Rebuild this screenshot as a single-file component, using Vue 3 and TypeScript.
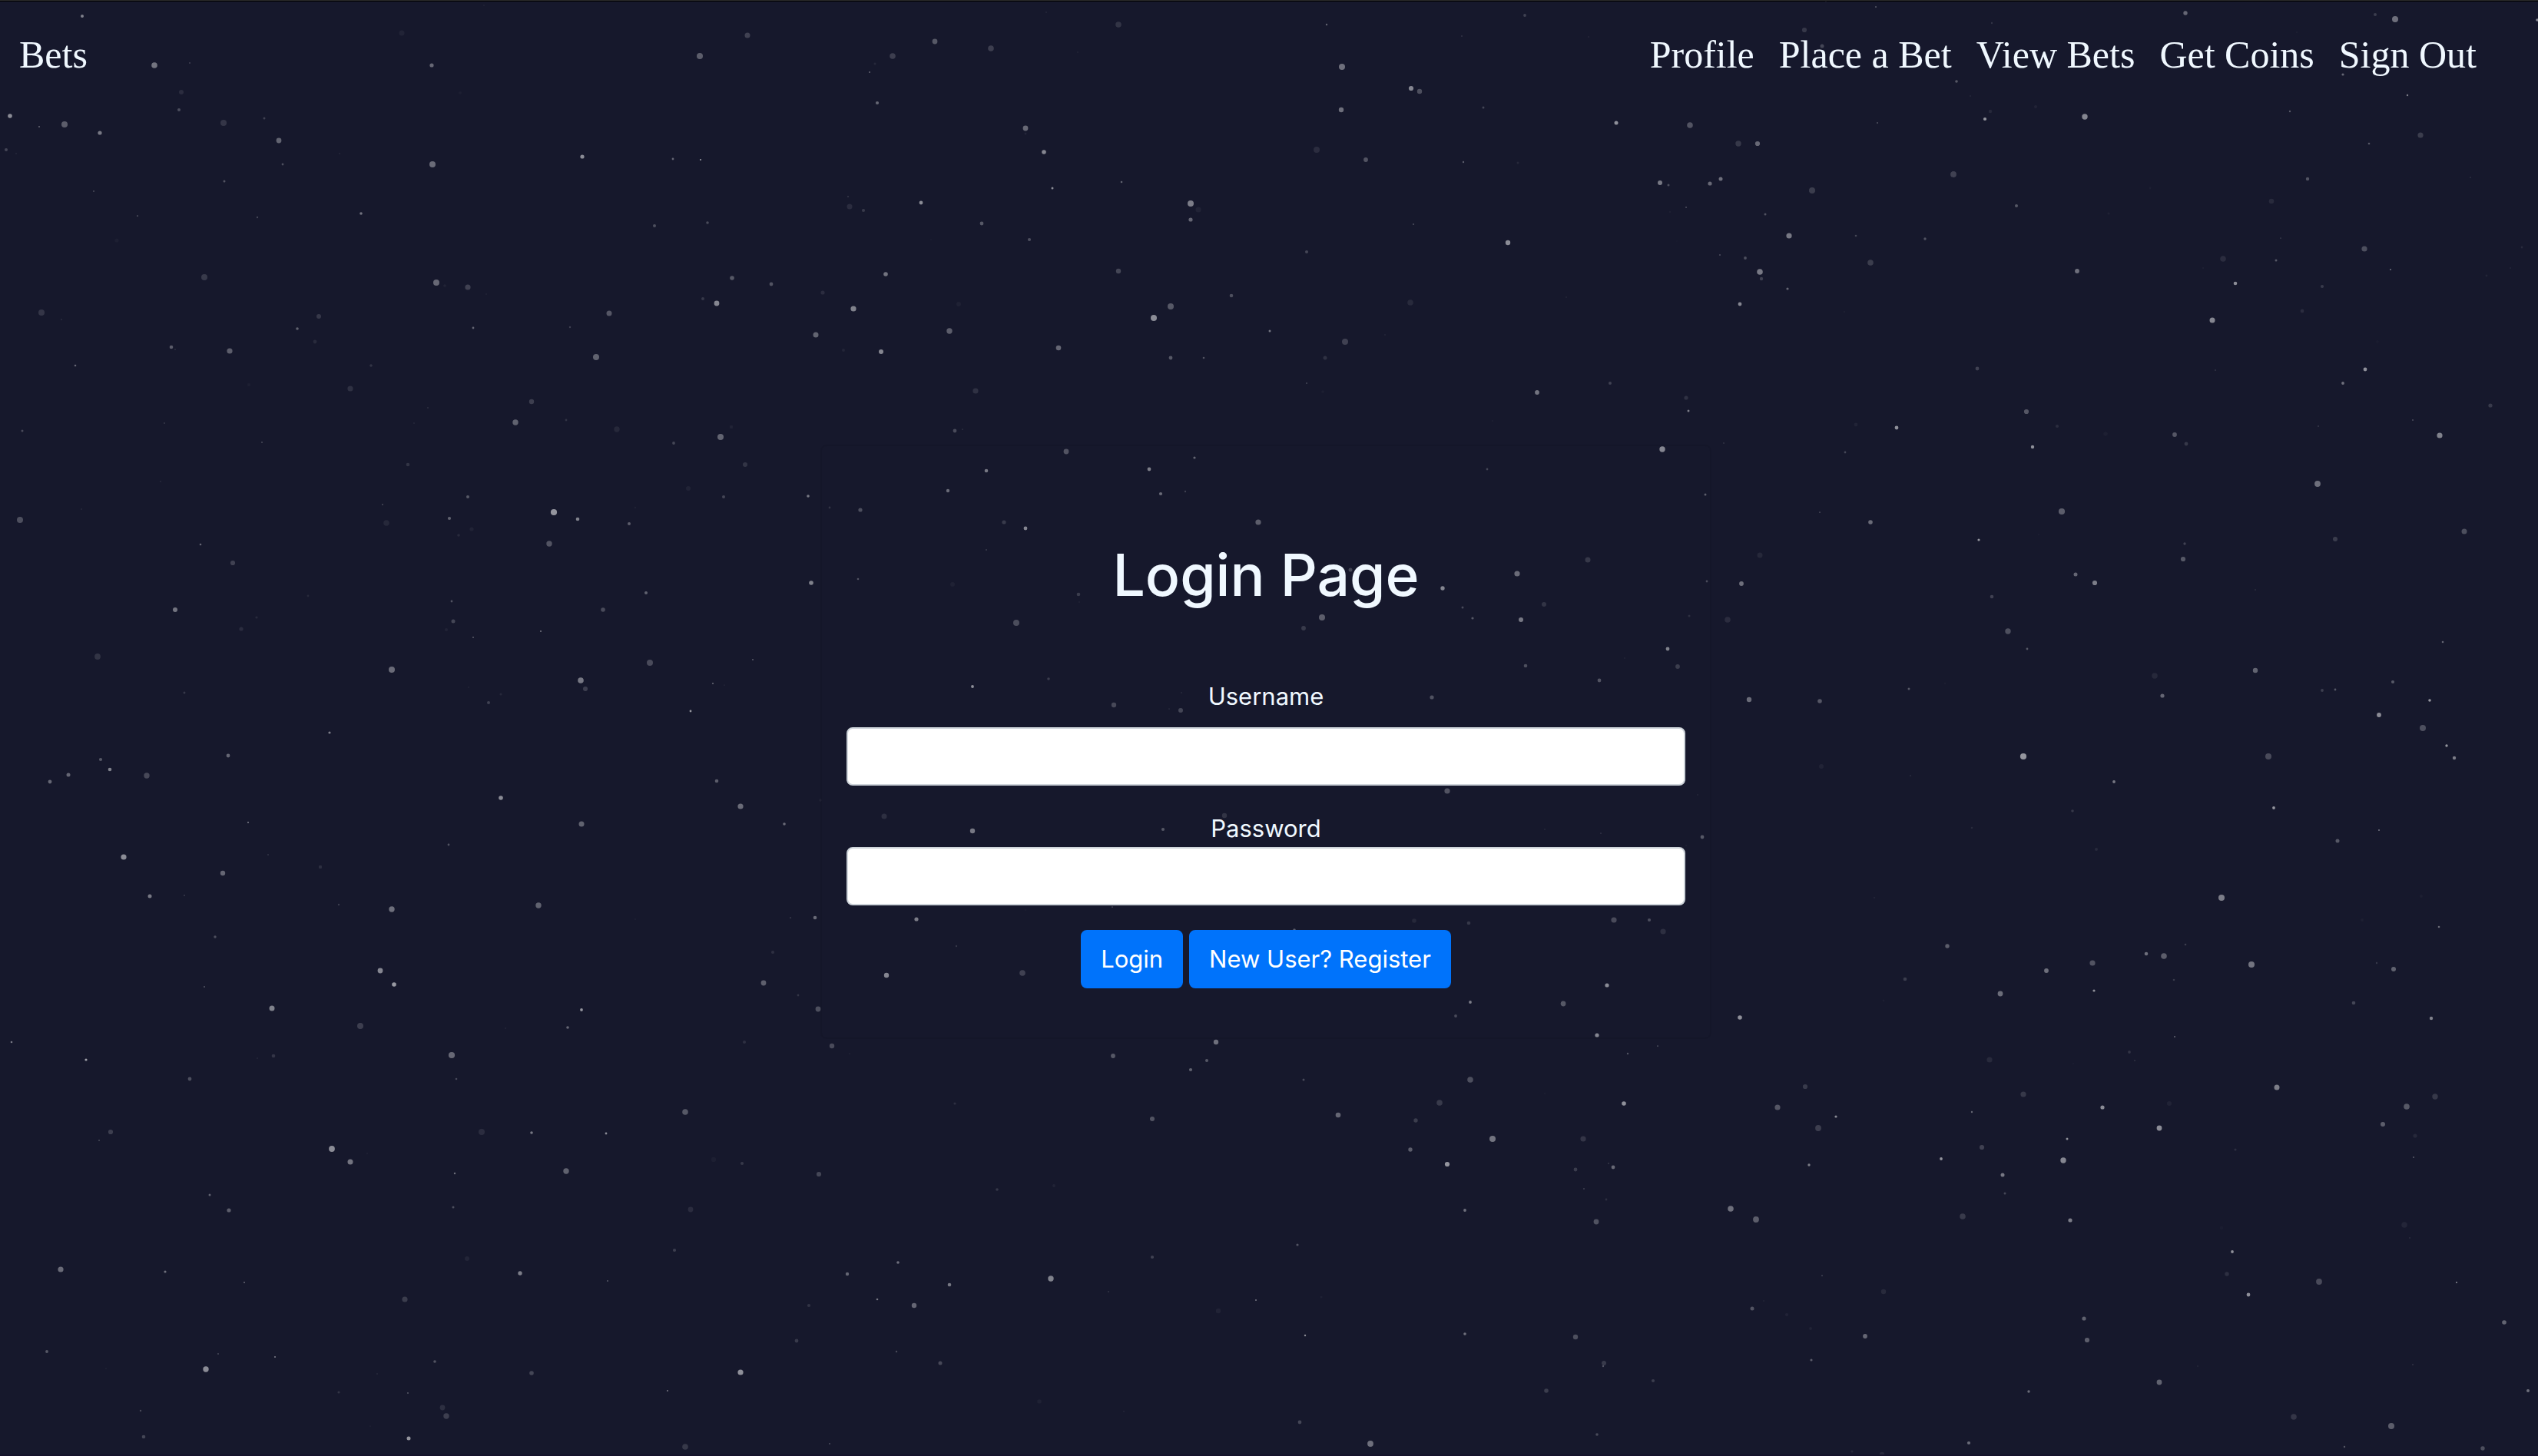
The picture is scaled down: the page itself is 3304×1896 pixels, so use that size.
<script setup lang="ts">
import { ref } from 'vue'

interface Star {
  x: number
  y: number
  r: number
  opacity: number
}

const navLinks: string[] = ['Profile', 'Place a Bet', 'View Bets', 'Get Coins', 'Sign Out']

const username = ref('')
const password = ref('')

// The sky is a 3 x 3 grid of sectors. Each sector is charted on a square of
// CHART units; every star is listed as "x y radius opacity%".
const SKY_WIDTH = 3304
const SKY_HEIGHT = 1896
const CHART = 1568
const SECTOR_WIDTH = 1102
const SECTOR_HEIGHT = 632
const SECTOR_LEFT: number[] = [0, 1102, 2202]

const sectors: string[][] = [
  [
    `152 52 2 45,896 17 1 5,744 107 3.5 5,1385 115 3.5 18,1296 181 4 30,286 210 3.8 40,351 204 1 18,799 212 2.6 35,
    336 298 3 9,852 299 2 3,19 375 2.8 50,331 356 2 24,489 381 1.5 18,119 401 4 30,72 410 0.7 70,414 398 4 13,
    185 430 2.6 42,517 455 3.4 33,11 485 2 20,30 497 0.7 15,801 531 4 36,523 532 1.4 24,629 495 0.7 14,1079 505 2.6 50,
    1246 514 1.4 34,1297 516 1 60,415 586 1.5 26,174 617 1 22,254 696 0.6 80,476 702 1.2 20,669 689 1.8 40,1212 730 2 24,
    1311 719 1.8 22,216 776 2.6 3,378 896 4 15,808 912 4 35,866 927 3.6 18,824 924 1.8 5,900 949 0.7 10,1356 898 2.8 28,
    1429 918 2.4 26,1524 946 2.6 9,1302 964 2 14,1327 979 3.4 48,1129 1013 3.5 27,77 1009 4 13,114 1031 0.6 30,590 1021 3 14,
    551 1063 1.8 32,877 1060 1.4 34,1056 1056 1.2 18,1511 1081 3.5 33,584 1104 2.4 8,317 1121 2.3 30,325 1130 0.6 30,
    426 1134 3.6 30,1104 1154 4 32,1563 1132 2 6,140 1182 1.3 34,687 1182 1.8 12,461 1243 2.2 3,649 1255 3.6 11,
    984 1298 3.2 17,792 1318 1 10,305 1367 0.8 24,767 1368 1 7,955 1364 3.7 32,1048 1356 1.4 12,1142 1388 3.7 7,
    1355 1379 2.2 5,41 1393 1.5 22,485 1430 1.1 20,1334 1412 4 33,1248 1431 1.9 20,755 1502 2.3 12,1380 1500 3 12,298 1555 0.8 14`,
    `370 39 1 7,504 79 3.8 12,890 80 1.2 32,1257 50 1.9 18,1140 116 0.7 25,1374 119 1 6,163 135 3.4 28,268 157 3.8 17,
    85 180 3.8 17,428 168 1.2 4,53 207 1.5 7,42 233 1 34,918 217 4 38,1046 286 3.1 48,1061 294 3.2 24,57 333 2.1 34,
    916 355 3.2 38,1179 347 1.5 20,331 415 3.4 35,332 431 1.5 6,1426 397 2.5 52,1563 405 3.8 26,366 491 2.8 48,871 484 4 9,
    962 516 2.9 26,1142 523 1.2 30,1244 527 1.5 7,510 587 1.3 32,1507 591 3 42,1522 598 1.5 24,382 608 1.5 50,3 634 0.7 30,
    138 654 2.4 50,6 668 3.5 9,32 681 2.1 15,638 658 4 44,652 677 3.6 5,638 710 2.6 34,1555 669 1.1 22,1525 685 1.2 4,
    251 721 2.4 28,1050 725 1 25,339 775 2.1 24,156 773 0.8 5,1225 783 3.2 50,1538 778 0.8 3,852 814 2 20,504 876 3.2 20,
    72 886 2.8 40,713 955 2.3 24,1333 961 1.1 6,1044 977 3.8 8,13 998 3.6 46,208 982 3 4,600 990 4 28,569 1027 4 50,
    191 1069 3.7 30,784 1070 1.5 40,998 1081 0.9 7,924 1104 4 18,64 1136 3 48,392 1125 3.3 34,600 1155 2.4 28,661 1155 1.3 26,
    886 1156 2.5 11,239 1264 3.6 11,853 1238 0.8 34,882 1265 1.8 3,1279 1268 2.9 40,1414 1239 2 18,1555 1284 2.6 11,
    1559 1327 1.5 44,201 1392 2.4 22,215 1388 0.6 30,1197 1359 0.7 8,1511 1451 3.7 48,407 1458 3.4 26,644 1478 1.6 34,
    259 1520 2.3 42,561 1517 2.4 44,1187 1515 1.4 20`,
    `342 22 1 28,249 5 1 6,915 43 2.7 34,1266 46 2 16,1303 63 4 38,1566 65 1.8 50,556 74 1.2 12,209 97 3.1 14,242 148 2.5 20,
    1121 103 1 4,1207 241 1.6 34,491 264 1.8 28,517 309 0.7 14,1326 307 1.2 44,638 346 2.1 5,554 360 2.3 7,1109 359 1.2 28,
    544 385 2.1 54,729 376 3.7 48,345 397 1.1 24,1351 436 3.6 16,87 463 3.7 14,123 464 3.1 35,1255 464 1.3 28,54 577 2.5 38,
    34 593 2.6 35,485 563 3.9 18,1141 577 2.2 26,1443 572 0.6 30,223 616 4 16,602 664 2 28,1074 649 3.3 8,849 607 1.4 3,
    773 690 1.6 4,136 693 1.5 25,180 762 3.6 42,305 762 1.3 20,432 772 1.7 26,1092 768 0.6 40,1246 803 3.6 24,1538 798 1.4 8,
    53 824 1 24,99 833 1.9 24,984 837 3.8 9,1083 842 1.5 28,332 849 3.8 16,126 878 3.8 42,129 901 2.2 18,714 876 2.9 38,
    1295 870 0.7 80,1517 867 0.8 10,947 866 0.8 8,178 933 1.6 34,1008 916 2.3 50,1472 890 1.4 6,1168 926 2.1 15,89 983 2.4 48,
    283 1008 0.8 8,1131 1005 2.4 9,964 1035 3.5 48,1271 1103 2 2,530 1191 2.4 18,970 1196 0.8 22,1248 1193 2.4 52,
    1206 1237 1.9 38,620 1330 3.1 27,1480 1310 2.6 15,1336 1358 1.1 22,304 1372 2.4 5,677 1377 2.1 9,380 1383 2.4 52,
    1161 1378 1 14,767 1402 2.8 3,895 1404 2.9 27,1386 1406 3.6 46,916 1433 2.4 14,632 1444 2.2 52,284 1461 1.4 20,
    60 1432 1.1 10,1159 1562 3.9 38`,
  ],
  [
    `1275 9 3 5,866 37 2 28,1340 36 2 20,1497 35 1.8 42,151 78 0.7 16,708 63 1.1 20,1026 88 4.1 54,1070 109 2.3 46,
    832 106 2.1 32,37 112 4 24,715 122 3.8 7,1166 125 2 30,873 141 2.6 5,1177 73 1.1 5,1536 71 1.4 12,849 162 1.8 8,
    371 190 1.3 34,1018 189 3.7 26,431 250 3.1 18,1503 314 2.8 46,1196 347 2 32,571 358 1.4 7,836 374 1.4 26,325 401 3 40,
    1117 402 2.8 22,475 427 1.6 8,840 438 2.5 20,447 465 2.6 9,827 467 2.1 5,1001 471 0.9 46,877 491 1 30,180 554 3.9 12,
    1204 573 4 22,1395 564 1.1 28,726 596 4 36,1076 629 3.8 42,1084 658 3 17,1320 640 1.1 34,1342 644 0.6 16,868 652 1 5,
    342 670 1.5 14,928 674 1.6 7,905 703 2 18,1279 730 1.4 54,611 799 1.6 44,423 873 2.4 34,187 886 2.1 28,203 917 2.3 46,
    127 936 2.5 34,92 957 2.4 34,272 938 3.7 21,1327 956 2.3 30,927 1009 2.8 50,1371 1038 3.6 36,1520 1018 1.7 5,
    1077 1095 3.5 32,460 1090 1.1 42,1453 1095 1.8 36,831 1160 1.4 26,229 1201 3.6 50,497 1194 0.8 22,593 1234 2.2 10,
    412 1252 3.2 34,278 1328 2.5 42,342 1326 0.7 32,627 1355 1.2 16,997 1356 3.7 32,726 1369 3.7 38,1464 1398 0.6 50,
    1510 1398 2.3 36,1176 1402 1.2 3,398 1460 1.7 24,1432 1508 2.1 10,705 1568 3.4 48`,
    `188 17 2.2 36,582 27 2.1 36,628 19 1.2 18,25 80 2.6 24,291 119 2.6 15,332 140 2.4 48,763 120 3.6 30,259 209 0.7 34,
    1373 240 3.5 14,1242 286 3.6 36,933 272 2.5 20,197 320 3 4,22 303 1.3 26,1104 332 2.7 48,430 352 2.3 16,431 378 1 5,
    1292 385 3 12,1141 395 1.5 22,881 427 4 30,1159 428 1.6 28,1249 435 3 42,314 443 4 23,847 462 2.9 15,1561 421 1.5 10,
    1521 529 2.4 46,1441 559 0.7 10,1258 582 2.3 24,1540 586 2.9 16,1395 631 2.4 26,374 624 1.8 16,233 650 1.9 52,
    621 669 1 8,1084 684 2.6 25,495 710 3.2 21,597 723 0.6 24,619 728 3 20,1112 988 3.6 26,70 1070 3.5 10,700 1066 3.2 12,
    233 1116 3.2 42,586 1111 2.1 28,1294 1112 0.8 12,1397 1123 0.6 34,1555 1163 1 4,493 1361 0.6 60,332 1372 0.9 4,
    130 1403 2.6 44,1422 1405 3.6 22,1487 1405 2.1 24,1051 1407 2.8 7,1153 1414 2.3 14,1512 1442 3.6 10,829 1437 1.8 30,204 1488 1.2 14`,
    `26 31 1.5 30,686 84 4.1 30,237 88 0.6 60,332 118 2.8 36,532 177 1.6 54,1431 150 3.5 24,1193 174 3 16,914 188 1.7 18,
    643 160 1 3,126 226 3.5 7,29 311 1.4 22,93 318 2.9 38,911 238 3.1 28,712 289 2.5 34,747 315 3.1 44,556 359 2.3 18,
    1045 338 0.8 16,67 433 3.8 9,586 472 3.7 24,622 529 1.4 28,1391 507 1.3 34,858 615 3.8 7,1045 598 3.2 33,1299 636 2.1 28,
    1168 663 1.9 17,1193 661 1.4 28,402 657 1.5 28,469 639 0.8 7,872 681 2.6 34,1367 695 1.8 54,107 693 3.2 36,238 698 2.8 27,
    1273 741 2.9 50,1354 785 4 24,1399 842 1.7 54,614 876 4.1 54,1069 876 4 22,1413 880 2.2 44,241 907 3 5,405 939 0.6 30,
    782 957 1.9 42,11 1000 0.9 7,1079 1043 1.9 54,706 1051 1.8 14,520 1106 1.3 8,1273 1115 0.8 70,1196 1148 2.5 28,
    20 1136 2.4 28,750 1175 2 8,982 1332 4 44,339 1332 1.3 5,1352 1328 2 3,1242 1405 2 3,1384 1426 1.3 36,474 1489 2.7 30,
    915 1484 1.3 16,843 1514 2.3 38,875 1521 3.8 30,743 1543 3.6 26,1037 1549 4 40,1269 1544 1.2 14,1300 1564 3 32,657 1568 2.9 38`,
  ],
  [
    `378 52 1.1 25,730 44 2.8 56,503 122 3.5 46,1414 40 3.4 31,1479 79 1.4 12,1077 127 1.9 54,1516 123 3.4 24,667 179 4 17,
    1052 184 1.8 34,936 187 0.7 12,22 231 1.3 42,1379 231 2 10,1541 243 3.2 22,160 288 1.6 60,476 282 0.8 12,506 275 2.3 13,
    836 274 4.1 35,351 350 2.4 24,845 349 1.3 22,1269 457 3.8 28,205 520 3.1 17,183 548 1.1 20,892 521 4 9,985 524 1.8 42,
    1123 525 1.4 50,615 575 3.9 50,649 618 3.5 40,680 590 0.9 5,1322 611 3.2 3,1375 623 2.1 14,843 655 1.2 38,1048 648 3.7 32,
    1517 657 3.1 20,389 724 1.5 32,424 773 2.6 30,839 765 1.5 24,1279 772 3.4 9,1249 902 2.1 17,865 930 3 6,112 966 3.6 36,
    306 972 1.6 38,963 977 2.7 44,453 1008 1.1 32,1126 1003 1.1 26,750 1062 3.6 16,1498 1082 2.1 12,1476 1196 2.4 15,
    87 1231 1.9 28,404 1238 0.9 24,510 1247 1 46,196 1284 0.6 14,381 1288 3.7 50,805 1263 1.8 26,984 1300 2.8 20,1371 1298 3.6 52,
    698 1302 0.7 16,627 1362 1.6 12,755 1364 0.9 30,1237 1358 1 42,820 1411 3.4 10,826 1440 3.7 17,260 1421 1.2 22,
    266 1507 2.3 20,757 1512 2.5 54,686 1472 0.6 12,1269 1537 3.8 14,1536 1529 0.8 40`,
    `74 14 3.2 48,326 8 3.8 18,1409 48 2.6 50,1156 102 1.9 44,1328 107 3.4 28,1129 146 1.9 22,1390 209 2.6 48,685 231 3.2 38,
    6 268 0.5 18,1503 244 0.6 70,494 275 2.9 28,668 290 2 28,1447 269 1.2 26,638 321 2.1 32,846 352 1.5 22,1156 353 3.8 24,
    1294 398 0.7 7,201 428 1.6 10,1099 426 3.8 15,1440 429 2.8 52,566 478 3 26,910 466 3.3 34,1055 483 2.7 16,1197 543 4 40,
    1364 544 3.6 13,1045 579 2.7 30,1113 626 3.1 54,1411 623 0.8 24,1420 634 2.4 35,1351 643 2.4 16,279 706 1.8 14,384 695 1.9 5,
    1366 705 0.9 20,1407 739 1.4 10,1146 774 1.9 38,1389 812 3.4 25,835 886 1.6 26,566 925 2.1 18,96 942 1.8 38,1 981 2.2 34,
    379 994 3.7 46,191 1014 2.3 42,485 1038 0.9 14,880 1054 1.5 4,57 1062 1.3 42,759 1064 1 42,125 1082 3.2 34,688 1098 3.2 5,
    1145 1174 1.8 38,850 1179 1.2 50,1350 1183 3.2 24,93 1230 1.2 22,174 1269 2.5 21,1403 1267 3 15,1401 1277 1.2 26,
    1494 1325 2.1 16,1296 1357 2.8 16,357 1392 2.8 4,513 1425 0.7 12,840 1458 2.4 20,970 1529 3.9 38,1390 1499 1.8 22`,
    `395 28 2.3 16,893 29 1.3 15,745 64 1.6 52,572 75 3.4 37,1226 105 2.3 20,1370 153 2.2 46,90 151 2.8 52,356 96 1.4 3,
    895 214 0.7 70,811 264 1.9 12,821 290 0.7 22,552 288 3.6 8,707 300 0.8 5,211 374 3.1 15,1084 376 3.5 44,1377 408 3.7 14,
    615 400 3.6 14,1324 438 3.8 28,159 442 3.6 27,761 442 2.6 50,885 430 3 5,519 457 1.2 34,268 472 1.6 50,1280 495 3 30,
    235 509 3.9 17,867 508 3.4 50,1340 533 2.6 7,696 544 1.5 52,538 571 3.1 18,1008 577 1.6 10,1338 602 1.1 28,463 608 1.9 54,
    689 614 3.7 48,217 627 1.7 44,576 661 2.5 42,580 720 1.5 20,72 769 3.8 38,119 803 3.9 30,502 795 3.8 15,702 807 2.6 44,
    1320 820 3.8 6,982 832 2.4 2,1331 864 0.7 18,1002 908 1.9 52,242 986 0.6 60,992 981 2.7 10,1162 1005 3.9 22,1417 1008 1 50,
    356 1036 3.2 8,1031 1048 2.4 52,134 1068 0.7 10,113 1091 2.5 26,177 1112 2 5,727 1125 2.6 32,220 1155 1.9 5,1506 1136 2.8 33,
    321 1180 2.9 34,733 1193 3.1 30,222 1259 1.6 30,1336 1273 0.8 20,937 1277 0.9 7,866 1331 3.4 32,625 1359 1.7 36,
    1549 1358 2 38,1115 1442 3.8 13,1296 1471 4 30,513 1525 2.1 36,1466 1542 2.7 24,1210 1538 1.2 28,297 1553 1.6 7,353 1562 3.2 7,1128 1567 1.6 30`,
  ],
]

const stars: Star[] = sectors.flatMap((row, rowIndex) =>
  row.flatMap((chart, columnIndex) =>
    chart.split(',').map((entry) => {
      const [x, y, r, percent] = entry.trim().split(' ').map(Number)
      return {
        x: Math.round(SECTOR_LEFT[columnIndex] + (x * SECTOR_WIDTH) / CHART),
        y: Math.round(rowIndex * SECTOR_HEIGHT + (y * SECTOR_HEIGHT) / CHART),
        r,
        opacity: percent / 100,
      }
    }),
  ),
)
</script>

<template>
  <div class="page">
    <svg
      class="sky"
      :viewBox="`0 0 ${SKY_WIDTH} ${SKY_HEIGHT}`"
      preserveAspectRatio="xMidYMid slice"
      aria-hidden="true"
    >
      <circle
        v-for="(star, index) in stars"
        :key="index"
        :cx="star.x"
        :cy="star.y"
        :r="star.r"
        :opacity="star.opacity"
        fill="#ffffff"
      />
    </svg>

    <header class="navbar">
      <a class="nav-link" href="#bets">Bets</a>
      <nav class="nav-links">
        <a v-for="link in navLinks" :key="link" class="nav-link" href="#">{{ link }}</a>
      </nav>
    </header>

    <main class="content">
      <form class="card" @submit.prevent>
        <h1 class="title">Login Page</h1>
        <div class="field">
          <label class="label label-spaced" for="username">Username</label>
          <input id="username" v-model="username" class="control" type="text" />
        </div>
        <div class="field">
          <label class="label" for="password">Password</label>
          <input id="password" v-model="password" class="control" type="password" />
        </div>
        <div class="actions">
          <button class="button" type="submit">Login</button>
          <button class="button" type="button">New User? Register</button>
        </div>
      </form>
    </main>
  </div>
</template>

<style>
body {
  margin: 0;
  background: #16182c;
}
</style>

<style scoped>
.page {
  position: relative;
  isolation: isolate;
  box-sizing: border-box;
  min-height: 100vh;
  padding-right: 8px;
  overflow: hidden;
  border-top: 1px solid #2b2b2b;
  border-bottom: 2px solid #15122b;
  background: #16182c;
  box-shadow: inset 0 1px 0 #000000;
  color: #f0f8ff;
  font-family: Inter, "Liberation Sans", sans-serif;
  font-size: 31px;
  line-height: 48px;
}

.sky {
  position: absolute;
  top: -1px;
  left: 0;
  z-index: -1;
  width: 100%;
  height: 100vh;
}

.navbar {
  display: flex;
  align-items: center;
  justify-content: space-between;
  padding: 40px 56px 40px 9px;
}

.nav-links {
  display: flex;
}

.nav-link {
  padding: 0 16px;
  color: inherit;
  font-family: "Liberation Serif", serif;
  font-size: 50px;
  line-height: 60px;
  text-decoration: none;
}

.content {
  display: flex;
  justify-content: center;
  padding-top: 438px;
}

.card {
  box-sizing: border-box;
  width: 1160px;
  max-width: 100%;
  padding: 120px 32px 64px;
  border: 2px solid rgba(0, 0, 0, 0.06);
  border-radius: 8px;
  text-align: center;
}

.title {
  margin: 0 0 86px;
  font-size: 75px;
  font-weight: 500;
  line-height: 96px;
}

.field {
  margin-bottom: 32px;
}

.label {
  display: block;
}

.label-spaced {
  margin-bottom: 16px;
}

.control {
  display: block;
  box-sizing: border-box;
  width: 100%;
  height: 76px;
  padding: 12px 24px;
  border: 2px solid #ced4da;
  border-radius: 8px;
  background: #ffffff;
  color: #495057;
  font: inherit;
}

.actions {
  display: flex;
  justify-content: center;
  gap: 8px;
}

.button {
  box-sizing: border-box;
  height: 76px;
  padding: 12px 24px;
  border: 2px solid #0073fb;
  border-radius: 8px;
  background: #0073fb;
  color: #ffffff;
  font: inherit;
  cursor: pointer;
}
</style>
